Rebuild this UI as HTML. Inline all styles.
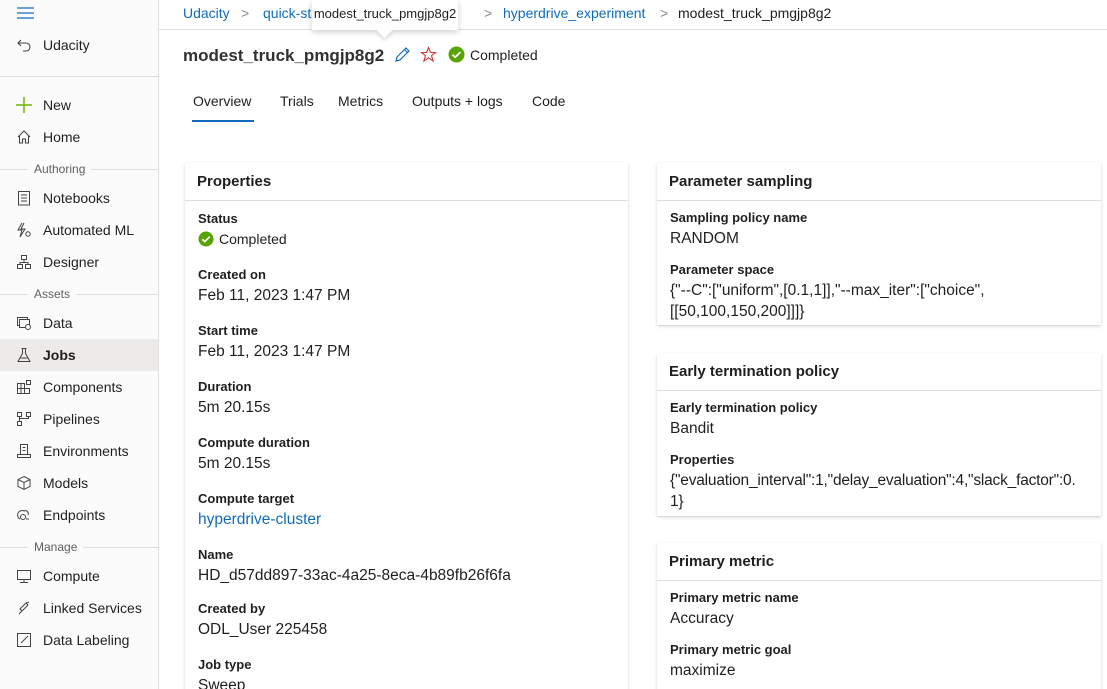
<!DOCTYPE html>
<html><head><meta charset="utf-8">
<style>
*{box-sizing:border-box;margin:0;padding:0}
html,body{width:1107px;height:689px;overflow:hidden}
body{background:#fff;font-family:"Liberation Sans",sans-serif;color:#201f1e;position:relative}
.a{position:absolute;white-space:nowrap}
#side{position:absolute;left:0;top:0;width:159px;height:689px;background:#fcfbfc;border-right:1px solid #e1dfdd}
.nav{position:absolute;left:0;width:158px;height:32px;font-size:14px;line-height:32px;padding-left:43px;color:#201f1e}
.nav svg{position:absolute;left:16px;top:8px}
.sec{position:absolute;left:0;width:158px;height:1px;background:#e1dfdd}
.sect{position:absolute;font-size:12px;color:#605e5c;background:#fcfbfc;padding:0 6px;line-height:14px}
.card{position:absolute;background:#fff;box-shadow:0 1.6px 3.6px rgba(0,0,0,.13),0 0.3px 0.9px rgba(0,0,0,.11)}
.ch{position:absolute;left:0;right:0;top:0;height:38px;border-bottom:1px solid #e1dfdd;font-size:15px;font-weight:bold;padding-left:12px;line-height:38px}
.lb{position:absolute;left:13px;font-size:13px;font-weight:bold;line-height:18px;white-space:nowrap}
.vl{position:absolute;left:13px;font-size:15.5px;line-height:21px;white-space:nowrap}
.lk{color:#0f6cbd}
.bc{font-size:14px;color:#0f6cbd;top:5px}
.chev{color:#8a8886;font-size:14px;top:5px}
</style></head><body>

<div id="side">
<svg class="a" style="left:17px;top:7px" width="17" height="12"><path d="M0 1h17M0 6h17M0 11h17" stroke="#0f6cbd" stroke-width="1.2"/></svg>
<div class="nav" style="top:29px"><svg width="16" height="16" viewBox="0 0 16 16"><path d="M5 3L2 6l3 3M2 6h8a4 4 0 010 8H7" fill="none" stroke="#444" stroke-width="1.1"/></svg>Udacity</div>
<div class="sec" style="top:76px"></div>
<div class="nav" style="top:89px"><svg width="16" height="16"><path d="M8 0v16M0 8h16" stroke="#6bb700" stroke-width="1.5"/></svg>New</div>
<div class="nav" style="top:121px"><svg width="16" height="16"><path d="M2 8L8 2l6 6M3.5 7v7h3v-4h3v4h3V7" fill="none" stroke="#444" stroke-width="1.1"/></svg>Home</div>
<div class="sec" style="top:169px"></div><div class="sect" style="left:28px;top:162px">Authoring</div>
<div class="nav" style="top:182px"><svg width="16" height="16"><rect x="2.5" y="1.5" width="11" height="13.5" fill="none" stroke="#444"/><path d="M5 5h6M5 8h6M5 11h6" stroke="#444"/></svg>Notebooks</div>
<div class="nav" style="top:214px"><svg width="16" height="16"><path d="M6 1L2 8h4l-2 7 5-8H5l3-6" fill="none" stroke="#444"/><circle cx="12" cy="12" r="2.2" fill="none" stroke="#444"/></svg>Automated ML</div>
<div class="nav" style="top:246px"><svg width="16" height="16"><rect x="5.5" y="1.5" width="5" height="4" fill="none" stroke="#444"/><rect x="1.5" y="10.5" width="5" height="4" fill="none" stroke="#444"/><rect x="9.5" y="10.5" width="5" height="4" fill="none" stroke="#444"/><path d="M8 5.5v3M4 10.5v-2h8v2" fill="none" stroke="#444"/></svg>Designer</div>
<div class="sec" style="top:294px"></div><div class="sect" style="left:28px;top:287px">Assets</div>
<div class="nav" style="top:307px"><svg width="16" height="16"><rect x="1.5" y="2.5" width="10" height="8" fill="none" stroke="#444"/><rect x="3.5" y="4.5" width="10" height="8" fill="#fcfbfc" stroke="#444"/><circle cx="12" cy="12" r="2.5" fill="#fcfbfc" stroke="#444"/></svg>Data</div>
<div class="a" style="left:0;top:339px;width:158px;height:32px;background:#edebe9"></div>
<div class="nav" style="top:339px;font-weight:bold"><svg width="16" height="16"><path d="M5.5 1.5h5M6.5 1.5v5L2 14.5h12L9.5 6.5v-5M4 11h8" fill="none" stroke="#444"/></svg>Jobs</div>
<div class="nav" style="top:371px"><svg width="16" height="16"><path d="M1.5 4.5h7v10h-7zM1.5 9.5h12v5h-5M5 4.5v10" fill="none" stroke="#444"/><rect x="10.5" y="1.5" width="4" height="4" fill="none" stroke="#444"/></svg>Components</div>
<div class="nav" style="top:403px"><svg width="16" height="16"><rect x="1.5" y="1.5" width="4" height="4" fill="none" stroke="#444"/><rect x="10.5" y="1.5" width="4" height="4" fill="none" stroke="#444"/><rect x="1.5" y="10.5" width="4" height="4" fill="none" stroke="#444"/><path d="M3.5 5.5v5M12.5 5.5v2h-9" fill="none" stroke="#444"/></svg>Pipelines</div>
<div class="nav" style="top:435px"><svg width="16" height="16"><path d="M4.5 1.5h7v10h-7zM1.5 11.5h13v3h-13zM6.5 4.5h3M6.5 7.5h3" fill="none" stroke="#444"/></svg>Environments</div>
<div class="nav" style="top:467px"><svg width="16" height="16"><path d="M8 1.5l6 3v7l-6 3-6-3v-7zM2 4.5l6 3 6-3M8 7.5v7" fill="none" stroke="#444"/></svg>Models</div>
<div class="nav" style="top:499px"><svg width="16" height="16"><path d="M4 12a4 4 0 114-8 3 3 0 014 4" fill="none" stroke="#444"/><circle cx="7" cy="10" r="2.5" fill="none" stroke="#444"/><path d="M10 12l3 0" stroke="#444"/></svg>Endpoints</div>
<div class="sec" style="top:547px"></div><div class="sect" style="left:28px;top:540px">Manage</div>
<div class="nav" style="top:560px"><svg width="16" height="16"><rect x="1.5" y="2.5" width="13" height="9" fill="none" stroke="#444"/><path d="M8 11.5v3M4 14.5h8" stroke="#444"/></svg>Compute</div>
<div class="nav" style="top:592px"><svg width="16" height="16"><path d="M3 14l4-4M6 11l-2-2 6-6 2 2zM10 3l3-1" fill="none" stroke="#444"/></svg>Linked Services</div>
<div class="nav" style="top:624px"><svg width="16" height="16"><rect x="1.5" y="1.5" width="13" height="13" fill="none" stroke="#444"/><path d="M5 11l7-7" stroke="#444"/></svg>Data Labeling</div>
</div>

<!-- breadcrumb -->
<div class="a" style="left:159px;top:29px;width:948px;height:1px;background:#e1dfdd"></div>
<div class="a bc" style="left:183px">Udacity</div>
<div class="a chev" style="left:241px">&gt;</div>
<div class="a bc" style="left:263px">quick-starts-ws</div>
<div class="a chev" style="left:484px">&gt;</div>
<div class="a bc" style="left:503px">hyperdrive_experiment</div>
<div class="a chev" style="left:660px">&gt;</div>
<div class="a" style="left:678px;top:5px;font-size:14px">modest_truck_pmgjp8g2</div>
<div class="a" style="left:312px;top:0;width:146px;height:30px;background:#fff;box-shadow:0 2px 6px rgba(0,0,0,.2);font-size:13px;line-height:27px;text-align:center">modest_truck_pmgjp8g2</div>
<div class="a" style="left:379px;top:25px;width:11px;height:11px;background:#fff;transform:rotate(45deg);box-shadow:2px 2px 3px rgba(0,0,0,.12)"></div>
<div class="a" style="left:372px;top:22px;width:26px;height:8px;background:#fff"></div>

<!-- title -->
<div class="a" style="left:183px;top:46px;font-size:17px;font-weight:bold;color:#323130">modest_truck_pmgjp8g2</div>
<svg class="a" style="left:394px;top:46px" width="17" height="17"><path d="M2 15l1-4L12 2l3 3-9 9zM10.5 3.5l3 3" fill="none" stroke="#0f6cbd" stroke-width="1.2"/></svg>
<svg class="a" style="left:420px;top:46px" width="17" height="17"><path d="M8.5 1.5l2 5h5l-4 3.2 1.6 5.3-4.6-3.2-4.6 3.2L5.5 9.7l-4-3.2h5z" fill="none" stroke="#d13438" stroke-width="1.1"/></svg>
<svg class="a" style="left:448px;top:46px" width="17" height="17"><circle cx="8.5" cy="8.5" r="8" fill="#57a300"/><path d="M4.5 8.7l2.7 2.6 5.3-5.3" fill="none" stroke="#fff" stroke-width="1.8"/></svg>
<div class="a" style="left:470px;top:47px;font-size:14px">Completed</div>

<!-- tabs -->
<div class="a" style="left:193px;top:93px;font-size:14px">Overview</div>
<div class="a" style="left:192px;top:120px;width:62px;height:2px;background:#0f6cbd"></div>
<div class="a" style="left:280px;top:93px;font-size:14px">Trials</div>
<div class="a" style="left:338px;top:93px;font-size:14px">Metrics</div>
<div class="a" style="left:412px;top:93px;font-size:14px">Outputs + logs</div>
<div class="a" style="left:532px;top:93px;font-size:14px">Code</div>

<!-- properties card -->
<div class="card" style="left:185px;top:163px;width:443px;height:540px">
<div class="ch">Properties</div>
<div class="lb" style="top:47px">Status</div>
<svg class="a" style="left:13px;top:68px" width="16" height="16"><circle cx="8" cy="8" r="7.5" fill="#57a300"/><path d="M4.3 8.2l2.5 2.4 4.9-4.9" fill="none" stroke="#fff" stroke-width="1.7"/></svg>
<div class="vl" style="left:34px;top:66px;font-size:14px">Completed</div>
<div class="lb" style="top:103px">Created on</div><div class="vl" style="top:122px">Feb 11, 2023 1:47 PM</div>
<div class="lb" style="top:159px">Start time</div><div class="vl" style="top:178px">Feb 11, 2023 1:47 PM</div>
<div class="lb" style="top:215px">Duration</div><div class="vl" style="top:234px">5m 20.15s</div>
<div class="lb" style="top:271px">Compute duration</div><div class="vl" style="top:290px">5m 20.15s</div>
<div class="lb" style="top:327px">Compute target</div><div class="vl lk" style="top:346px">hyperdrive-cluster</div>
<div class="lb" style="top:383px">Name</div><div class="vl" style="top:402px">HD_d57dd897-33ac-4a25-8eca-4b89fb26f6fa</div>
<div class="lb" style="top:437px">Created by</div><div class="vl" style="top:456px">ODL_User 225458</div>
<div class="lb" style="top:493px">Job type</div><div class="vl" style="top:512px">Sweep</div>
</div>

<!-- right cards -->
<div class="card" style="left:657px;top:163px;width:444px;height:162px">
<div class="ch">Parameter sampling</div>
<div class="lb" style="top:46px">Sampling policy name</div><div class="vl" style="top:65px">RANDOM</div>
<div class="lb" style="top:98px">Parameter space</div>
<div class="vl" style="top:117px">{"--C":["uniform",[0.1,1]],"--max_iter":["choice",<br>[[50,100,150,200]]]}</div>
</div>
<div class="card" style="left:657px;top:353px;width:444px;height:163px">
<div class="ch">Early termination policy</div>
<div class="lb" style="top:46px">Early termination policy</div><div class="vl" style="top:65px">Bandit</div>
<div class="lb" style="top:98px">Properties</div>
<div class="vl" style="top:117px;letter-spacing:-0.2px">{"evaluation_interval":1,"delay_evaluation":4,"slack_factor":0.<br>1}</div>
</div>
<div class="card" style="left:657px;top:543px;width:444px;height:170px">
<div class="ch">Primary metric</div>
<div class="lb" style="top:46px">Primary metric name</div><div class="vl" style="top:65px">Accuracy</div>
<div class="lb" style="top:98px">Primary metric goal</div><div class="vl" style="top:117px">maximize</div>
</div>
</body></html>
